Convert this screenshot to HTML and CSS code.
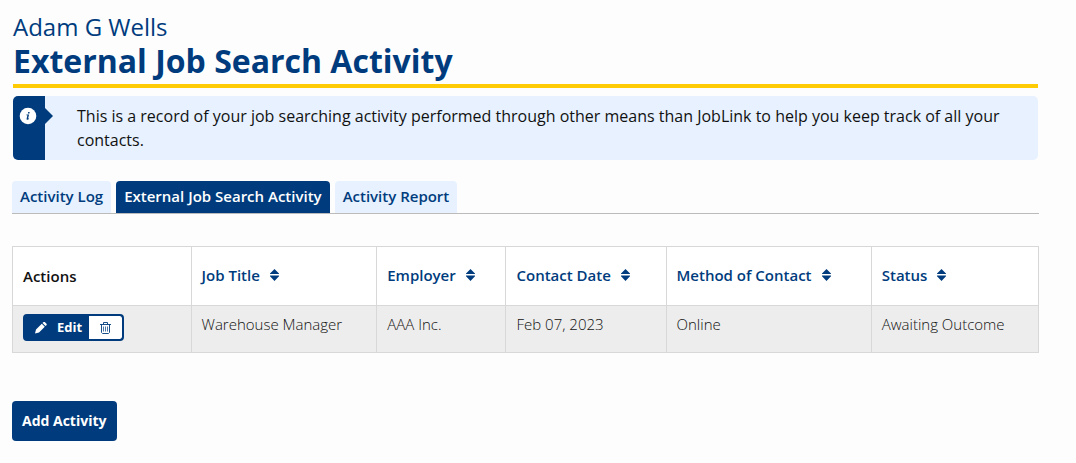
FILE: index.html
```html
<!DOCTYPE html>
<html lang="en">

<head>
    <meta charset="utf-8">
    <meta name="viewport" content="width=device-width, initial-scale=1">
    <title>External Job Search Activity</title>
    <link rel="stylesheet" href="styles.css">
</head>

<body>
    <!-- shared icon for the sortable columns -->
    <svg class="sprite" aria-hidden="true">
        <symbol id="sort" viewBox="0 0 9 12">
            <path d="M4.500 0L9 4.500V5H0V4.500zM0 6.500h9V7.200L4.500 12L0 7.200z" />
        </symbol>
    </svg>

    <main class="page">
        <header class="heading">
            <div class="userName">Adam G Wells</div>
            <h1>External Job Search Activity</h1>
        </header>

        <div class="info">
            <div class="infoIcon">
                <svg width="18" height="18" viewBox="0 0 18 18" aria-hidden="true">
                    <circle cx="9" cy="9" r="8.300" fill="#fff" />
                    <path d="M9.200 5h1.500l-.3 1.500H8.900zM7.500 7.500h2.600l-1 4 .9-.2-.2.900c-.8.500-2.500.8-2.200-.5l.8-3.400H7.300z" fill="#003c7d" />
                </svg>
            </div>
            <p>This is a record of your job searching activity performed through other means than JobLink to help you keep track of all your contacts.</p>
        </div>

        <nav class="tabs">
            <a href="#log" class="tab">Activity Log</a>
            <a href="#external" class="tab active" aria-current="page">External Job Search Activity</a>
            <a href="#report" class="tab">Activity Report</a>
        </nav>

        <table class="activities">
            <thead>
                <tr>
                    <th class="colActions">Actions</th>
                    <th class="colTitle"><a href="#title">Job Title <svg class="sortIcon"><use href="#sort" /></svg></a></th>
                    <th class="colEmployer"><a href="#employer">Employer <svg class="sortIcon"><use href="#sort" /></svg></a></th>
                    <th class="colDate"><a href="#date">Contact Date <svg class="sortIcon"><use href="#sort" /></svg></a></th>
                    <th class="colMethod"><a href="#method">Method of Contact <svg class="sortIcon"><use href="#sort" /></svg></a></th>
                    <th class="colStatus"><a href="#status">Status <svg class="sortIcon"><use href="#sort" /></svg></a></th>
                </tr>
            </thead>
            <tbody>
                <tr>
                    <td>
                        <div class="buttonGroup">
                            <button type="button" class="editButton">
                                <svg width="12" height="12" viewBox="0 0 12 12" aria-hidden="true">
                                    <path d="M0 11.500l1-4L6.800 1.800l3 3L4 10.500zM7.500 1.100L8.600 0h1.200l1.900 1.900v1L10.500 4.100z" fill="#fff" />
                                </svg>
                                Edit
                            </button>
                            <button type="button" class="deleteButton" aria-label="Delete">
                                <svg width="11" height="12" viewBox="0 0 11 12" fill="none" stroke="#003c7d" stroke-width=".9" aria-hidden="true">
                                    <path d="M0 2.500h11M3.500 2.500v-2h4v2M1.500 2.500v8l1 1h6l1-1v-8" />
                                    <path d="M3.500 4.500v5M5.500 4.500v5M7.500 4.500v5" stroke-width=".7" />
                                </svg>
                            </button>
                        </div>
                    </td>
                    <td>Warehouse Manager</td>
                    <td>AAA Inc.</td>
                    <td>Feb 07, 2023</td>
                    <td>Online</td>
                    <td>Awaiting Outcome</td>
                </tr>
            </tbody>
        </table>

        <button type="button" class="addButton">Add Activity</button>
    </main>
</body>

</html>
```

FILE: styles.css
```css
* {
    box-sizing: border-box;
}

body {
    margin: 0;
    background-color: #fdfdfd;
    color: #111;
    font-family: "Open Sans", sans-serif;
    font-size: 15px;
    line-height: 20px;
}

.sprite {
    position: absolute;
    width: 0;
    height: 0;
}

.page {
    padding: 11px 37px 22px 12px;
}

.heading {
    margin: 0 1px 8px;
    padding-bottom: 5px;
    border-bottom: 4px solid #ffcb05;
    color: #003c7d;
}

.userName {
    font-size: 24px;
    line-height: 32px;
}

h1 {
    margin: 0;
    font-size: 32px;
    line-height: 36px;
    font-weight: 700;
}

.info {
    display: flex;
    margin: 0 1px;
    border-radius: 5px;
    background-color: #e7f1ff;
}

.infoIcon {
    position: relative;
    flex: none;
    width: 32px;
    padding: 11px 6px;
    border-radius: 5px 0 0 5px;
    background-color: #003c7d;
}

.infoIcon svg {
    display: block;
}

/* arrow pointing at the message */
.infoIcon::after {
    content: "";
    position: absolute;
    top: 12px;
    left: 100%;
    border: 8px solid transparent;
    border-left-color: #003c7d;
    border-right: 0;
}

.info p {
    margin: 0;
    padding: 8px 32px;
    font-size: 16px;
    line-height: 24px;
}

.tabs {
    display: flex;
    gap: 5px;
    margin: 21px 0 32px;
    border-bottom: 1px solid #bbb;
}

.tab {
    padding: 5px 8px 7px;
    border-radius: 4px 4px 0 0;
    background-color: #e7f1ff;
    color: #003c7d;
    font-weight: 600;
    text-decoration: none;
}

.tab.active {
    background-color: #003c7d;
    color: #fff;
}

.activities {
    width: 100%;
    border-collapse: collapse;
    table-layout: fixed;
    background-color: #fff;
}

.activities th,
.activities td {
    padding: 8px 10px;
    border: 1px solid #d8d8d8;
    text-align: left;
}

.activities th {
    height: 59px;
    font-weight: 600;
}

.activities th a {
    display: flex;
    align-items: center;
    gap: 10px;
    padding-bottom: 2px;
    color: #003c7d;
    text-decoration: none;
}

.activities td {
    height: 47px;
    background-color: #ededed;
    color: #111;
    font-weight: 300;
    vertical-align: top;
}

.colActions {
    width: 17.4%;
}

.colTitle {
    width: 18.1%;
}

.colEmployer {
    width: 12.6%;
}

.colDate {
    width: 15.6%;
}

.colMethod {
    width: 20%;
}

.sortIcon {
    flex: none;
    width: 9px;
    height: 12px;
    fill: #003c7d;
}

.buttonGroup {
    display: inline-flex;
    vertical-align: top;
    border: 2px solid #003c7d;
    border-radius: 4px;
    background-color: #003c7d;
    overflow: hidden;
}

button {
    margin: 0;
    border: 0;
    font-family: inherit;
    cursor: pointer;
}

.editButton {
    display: flex;
    align-items: center;
    gap: 10px;
    padding: 0 7px 0 10px;
    background-color: #003c7d;
    color: #fff;
    font-size: 13px;
    line-height: 23px;
    font-weight: 700;
}

.deleteButton {
    display: flex;
    align-items: center;
    padding: 0 11px;
    border-radius: 0 2px 2px 0;
    background-color: #fff;
}

.addButton {
    display: block;
    margin-top: 48px;
    padding: 10px;
    border-radius: 4px;
    background-color: #003c7d;
    color: #fff;
    font-size: 14px;
    line-height: 20px;
    font-weight: 700;
}
```
